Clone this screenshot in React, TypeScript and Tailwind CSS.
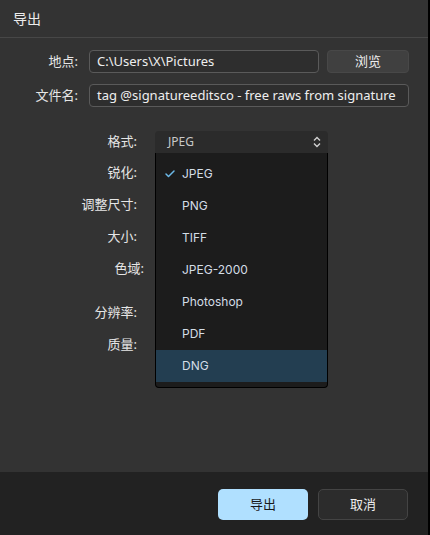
import { Check } from "lucide-react";

const FORMATS = ["JPEG", "PNG", "TIFF", "JPEG-2000", "Photoshop", "PDF", "DNG"];

const font = "font-['Segoe_UI','Noto_Sans','Noto_Sans_CJK_SC',sans-serif]";

function Label({ children, className = "" }: { children: React.ReactNode; className?: string }) {
  return <span className={`text-right text-[13px] text-[#e6e6e6] ${className}`}>{children}</span>;
}

function FormatMenu() {
  return (
    <div className="absolute left-0 top-[22px] z-10 w-[173px] overflow-hidden rounded-b-[4px] border border-t-0 border-black bg-[#1c1c1c] pb-[5px] pt-[5px] font-['Inter',sans-serif]">
      {FORMATS.map((f) => (
        <div
          key={f}
          className={`flex h-[32px] items-center text-[12px] text-[#d4dde6] ${
            f === "DNG" ? "bg-[#233e51]" : ""
          }`}
        >
          <span className="flex w-[26px] justify-start pl-[8px]">
            {f === "JPEG" && <Check size={12} strokeWidth={3} className="text-[#6cb9e8]" />}
          </span>
          {f}
        </div>
      ))}
    </div>
  );
}

export default function App() {
  return (
    <div className={`flex h-[535px] w-[430px] ${font}`}>
      <div className="flex w-[428px] flex-col bg-[#333333]">
        {/* 标题 */}
        <div className="flex h-[38px] items-center border-b border-[#474747] px-[13px] text-[14px] text-[#ececec]">
          导出
        </div>

        <div className="flex-1 pt-[12px]">
          <div className="flex items-center">
            <Label className="w-[78px]">地点:</Label>
            <div className="ml-[11px] flex h-[23px] w-[230px] items-center rounded-[4px] border border-[#5a5a5a] bg-[#2e2e2e] px-[7px] text-[13px] text-[#eeeeee]">
              C:\Users\X\Pictures
            </div>
            <button className="ml-[8px] h-[23px] w-[82px] rounded-[4px] border border-[#484848] bg-[#404040] text-[13px] text-[#eeeeee]">
              浏览
            </button>
          </div>
          <div className="mt-[11px] flex items-center">
            <Label className="w-[78px]">文件名:</Label>
            <div className="ml-[11px] flex h-[23px] w-[320px] items-center overflow-hidden whitespace-nowrap rounded-[4px] border border-[#5a5a5a] bg-[#2e2e2e] px-[7px] text-[13px] text-[#eeeeee]">
              tag @signatureeditsco - free raws from signature
            </div>
          </div>

          {/* 格式 */}
          <div className="mt-[24px] flex items-center">
            <Label className="w-[137px]">格式:</Label>
            <div className="relative ml-[18px] w-[173px]">
              <div className="flex h-[22px] items-center justify-between rounded-t-[4px] bg-[#2b2b2b] pl-[13px] pr-[6px] text-[12px] text-[#c8c8c8]">
                JPEG
                <svg width="10" height="12" viewBox="0 0 10 12" fill="none" stroke="#d0d0d0" strokeWidth="1.4">
                  <path d="M2 4.5 5 1.5 8 4.5M2 7.5 5 10.5 8 7.5" />
                </svg>
              </div>
              <FormatMenu />
            </div>
          </div>

          <div className="mt-[4px] flex flex-col">
            <div className="flex h-[32px] items-center"><Label className="w-[137px]">锐化:</Label></div>
            <div className="flex h-[32px] items-center"><Label className="w-[137px]">调整尺寸:</Label></div>
            <div className="flex h-[32px] items-center"><Label className="w-[137px]">大小:</Label></div>
            <div className="flex h-[32px] items-center"><Label className="w-[144px]">色域:</Label></div>
            <div className="mt-[12px] flex h-[32px] items-center"><Label className="w-[137px]">分辨率:</Label></div>
            <div className="flex h-[32px] items-center"><Label className="w-[137px]">质量:</Label></div>
          </div>
        </div>

        {/* 底部按钮 */}
        <div className="flex h-[63px] items-start justify-end gap-[10px] bg-[#222222] pr-[20px] pt-[17px]">
          <button className="h-[31px] w-[90px] rounded-[5px] bg-[#b0e0ff] text-[13px] text-[#1a1a1a]">导出</button>
          <button className="h-[31px] w-[90px] rounded-[5px] border border-[#444444] bg-[#2c2c2c] text-[13px] text-[#eeeeee]">
            取消
          </button>
        </div>
      </div>
      <div className="w-[2px] bg-black" />
    </div>
  );
}
